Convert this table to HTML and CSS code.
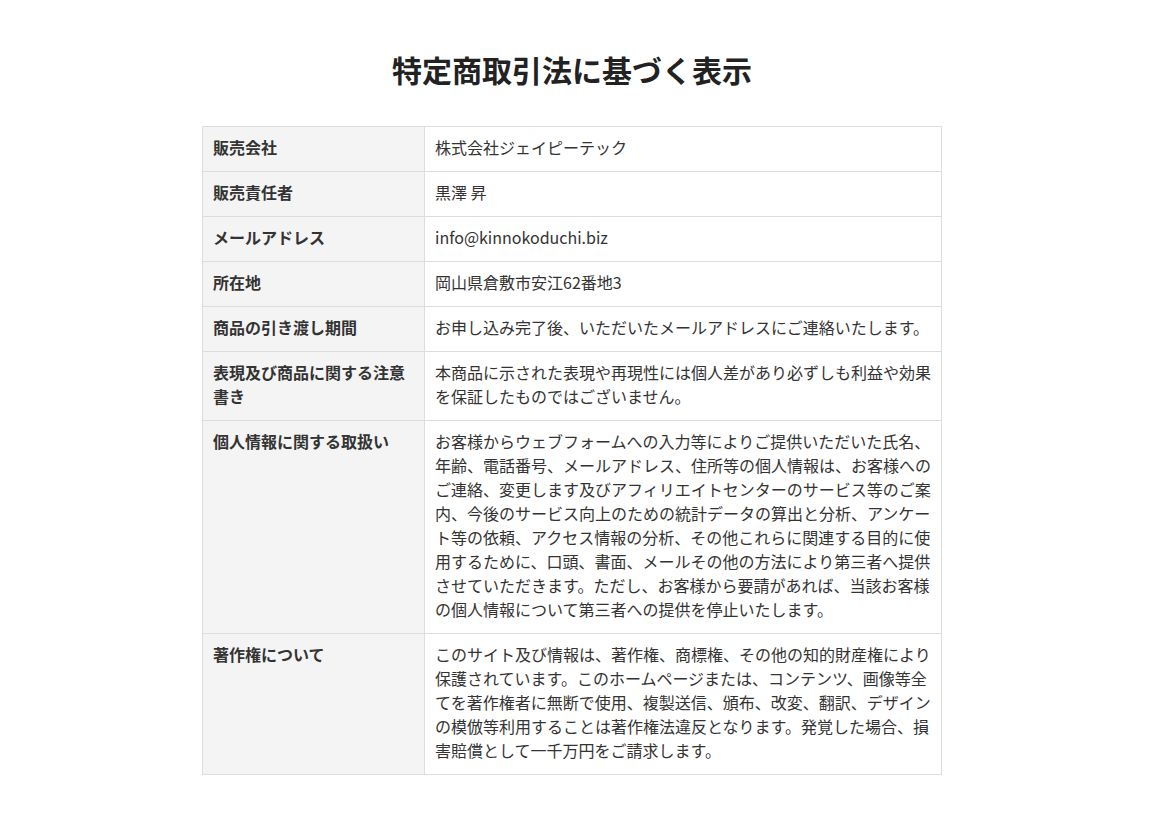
FILE: index.html
```html
<!DOCTYPE html>
<html lang="ja">
<head>
<meta charset="utf-8">
<title>特定商取引法に基づく表示</title>
<link rel="stylesheet" href="styles.css">
</head>
<body>
<div class="page">
  <h1 class="title">特定商取引法に基づく表示</h1>
  <table class="law-table">
    <tbody>
      <tr><th>販売会社</th><td>株式会社ジェイピーテック</td></tr>
      <tr><th>販売責任者</th><td>黒澤 昇</td></tr>
      <tr><th>メールアドレス</th><td>info@kinnokoduchi.biz</td></tr>
      <tr><th>所在地</th><td>岡山県倉敷市安江62番地3</td></tr>
      <tr><th>商品の引き渡し期間</th><td>お申し込み完了後、いただいたメールアドレスにご連絡いたします。</td></tr>
      <tr><th>表現及び商品に関する注意書き</th><td>本商品に示された表現や再現性には個人差があり必ずしも利益や効果を保証したものではございません。</td></tr>
      <tr><th>個人情報に関する取扱い</th><td>お客様からウェブフォームへの入力等によりご提供いただいた氏名、年齢、電話番号、メールアドレス、住所等の個人情報は、お客様へのご連絡、変更します及びアフィリエイトセンターのサービス等のご案内、今後のサービス向上のための統計データの算出と分析、アンケート等の依頼、アクセス情報の分析、その他これらに関連する目的に使用するために、口頭、書面、メールその他の方法により第三者へ提供させていただきます。ただし、お客様から要請があれば、当該お客様の個人情報について第三者への提供を停止いたします。</td></tr>
      <tr><th>著作権について</th><td>このサイト及び情報は、著作権、商標権、その他の知的財産権により保護されています。このホームページまたは、コンテンツ、画像等全てを著作権者に無断で使用、複製送信、頒布、改変、翻訳、デザインの模倣等利用することは著作権法違反となります。発覚した場合、損害賠償として一千万円をご請求します。</td></tr>
    </tbody>
  </table>
</div>
</body>
</html>
```

FILE: styles.css
```css
html, body {
  margin: 0;
  padding: 0;
  background: #ffffff;
}

body {
  font-family: "Noto Sans CJK JP", "Noto Sans", sans-serif;
  color: #333333;
}

.page {
  width: 1144px;
  padding-top: 47px;
  padding-bottom: 40px;
}

.title {
  margin: 0 0 34px;
  text-align: center;
  font-size: 30px;
  line-height: 45px;
  font-weight: 700;
  color: #222222;
}

.law-table {
  width: 740px;
  margin: 0 auto;
  border-collapse: collapse;
  table-layout: fixed;
  font-size: 16px;
  line-height: 24px;
}

.law-table th,
.law-table td {
  border: 1px solid #dddddd;
  padding: 8px 10px 12px;
  text-align: left;
  vertical-align: top;
}

.law-table th {
  width: 201px;
  background: #f4f4f4;
  font-weight: 700;
  color: #333333;
}

.law-table td {
  background: #ffffff;
  color: #333333;
}
```
